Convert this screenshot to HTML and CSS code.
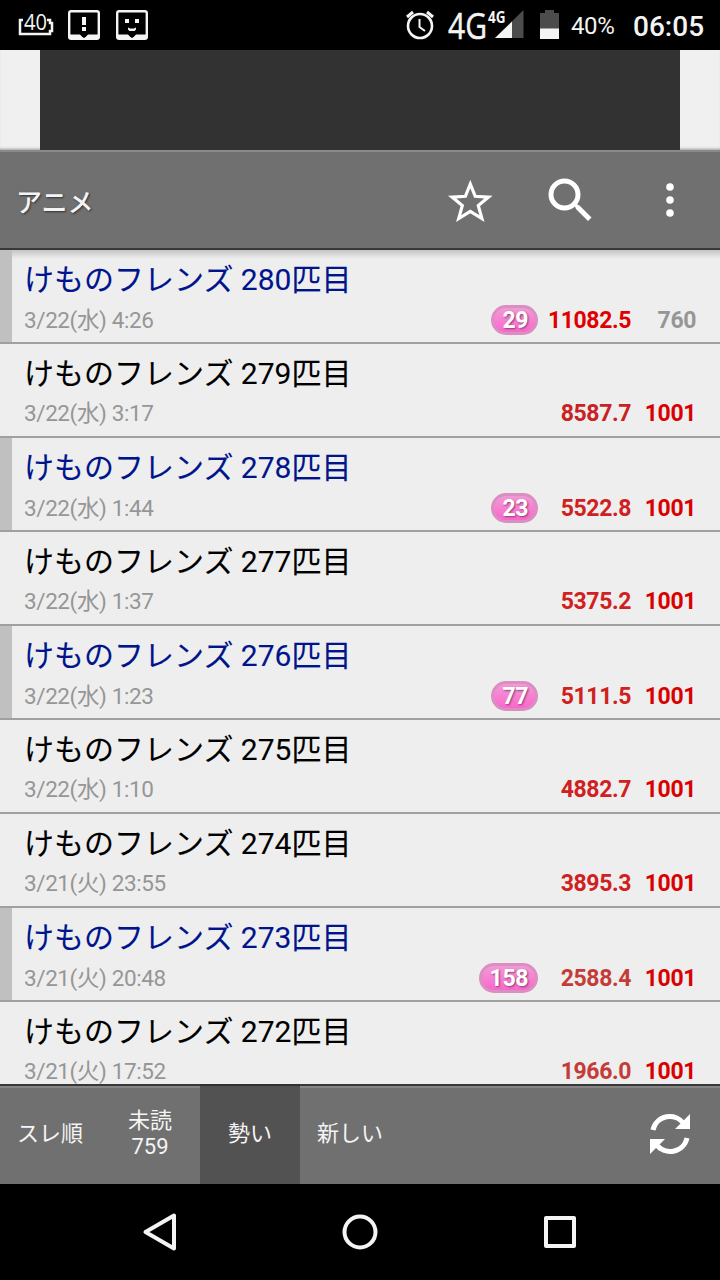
FILE: index.html
```
<!DOCTYPE html>
<html lang="ja">

<head>
    <meta charset="UTF-8">
    <meta name="viewport" content="width=device-width, initial-scale=1.0">
    <title>アニメ</title>
    <link rel="stylesheet" href="styles.css">
</head>

<body>

    <div class="status">
        <svg class="status-left" width="160" height="50" viewBox="0 0 160 50">
            <path d="M23 20h-3v14h30v-3h2v-8h-2v-3h-3" fill="none" stroke="#f4f4f4" stroke-width="2.5" />
            <text x="24" y="30" font-size="22" textLength="23" lengthAdjust="spacingAndGlyphs">40</text>
            <rect x="69.2" y="11.2" width="29.6" height="27.6" rx="2" fill="none" stroke="#f4f4f4" stroke-width="2.4" />
            <path d="M69 34.5h11l4 4 4-4h11v4.5h-30z" fill="#f4f4f4" />
            <path d="M80 34h8l-4 4z" fill="#000" />
            <path d="M82 17h4v8h-4zM82 27h4v4h-4z" fill="#f4f4f4" />
            <rect x="117.2" y="11.2" width="29.6" height="27.6" rx="2" fill="none" stroke="#f4f4f4" stroke-width="2.4" />
            <path d="M117 34.5h11l4 4 4-4h11v4.5h-30z" fill="#f4f4f4" />
            <path d="M128 34h8l-4 4z" fill="#000" />
            <path d="M125 19h4v4h-4zM135 19h4v4h-4zM128 27.5l2 1h4l2-1v2l-1.5 1.5h-5l-1.5-1.5z" fill="#f4f4f4" />
        </svg>
        <svg class="status-icons" width="165" height="50" viewBox="400 0 165 50">
            <g fill="none" stroke="#f4f4f4">
                <circle cx="420" cy="26" r="12" stroke-width="2.6" />
                <path d="M419.5 19v8l5.5 4" stroke-width="2" />
                <path d="M407 17l6-5M433 17l-6-5" stroke-width="3" />
            </g>
            <text class="net" x="448" y="39" font-size="37" textLength="39" lengthAdjust="spacingAndGlyphs">4G</text>
            <path d="M523.5 10v28H495z" fill="#4c4c4c" />
            <path d="M512 21.5V38H495z" fill="#f4f4f4" />
            <text class="net-small" x="488" y="23" font-size="16" textLength="17.5" lengthAdjust="spacingAndGlyphs">4G</text>
            <path d="M540 13h5v-3h9v3h5v16h-19z" fill="#4c4c4c" />
            <path d="M540 28.5h19V39h-19z" fill="#f4f4f4" />
        </svg>
        <span class="percent">40%</span>
        <span class="clock">06:05</span>
    </div>

    <div class="banner">
        <div class="ad"></div>
    </div>

    <div class="header">
        <h1>アニメ</h1>
        <div class="header-icons">
            <svg width="100" height="96" viewBox="420 152 100 96">
                <path d="M470.3 184l4.9 12.3 13.3.8-10.2 8.5 3.6 13-11.6-7.1-11.6 7.1 3.6-13-10.2-8.5 13.3-.8z" fill="none" stroke="#fff" stroke-width="3.2" />
            </svg>
            <svg width="100" height="96" viewBox="520 152 100 96">
                <circle cx="564.5" cy="194.5" r="13.5" fill="none" stroke="#fff" stroke-width="5" />
                <path d="M574 204l2 5 12 12 3.5-3.5-12-12-4-2z" fill="#fff" />
            </svg>
            <svg width="100" height="96" viewBox="620 152 100 96">
                <circle cx="670" cy="187" r="3.8" fill="#fff" />
                <circle cx="670" cy="200" r="3.8" fill="#fff" />
                <circle cx="670" cy="213" r="3.8" fill="#fff" />
            </svg>
        </div>
    </div>

    <div class="lista">
        <div class="row read">
            <h2>けものフレンズ 280匹目</h2>
            <div class="info"><span class="date">3/22(水) 4:26</span><span class="badge">29</span><span class="speed s1">11082.5</span><span class="count open">760</span></div>
        </div>
        <div class="row">
            <h2>けものフレンズ 279匹目</h2>
            <div class="info"><span class="date">3/22(水) 3:17</span><span class="speed s2">8587.7</span><span class="count">1001</span></div>
        </div>
        <div class="row read">
            <h2>けものフレンズ 278匹目</h2>
            <div class="info"><span class="date">3/22(水) 1:44</span><span class="badge">23</span><span class="speed s3">5522.8</span><span class="count">1001</span></div>
        </div>
        <div class="row">
            <h2>けものフレンズ 277匹目</h2>
            <div class="info"><span class="date">3/22(水) 1:37</span><span class="speed s3">5375.2</span><span class="count">1001</span></div>
        </div>
        <div class="row read">
            <h2>けものフレンズ 276匹目</h2>
            <div class="info"><span class="date">3/22(水) 1:23</span><span class="badge">77</span><span class="speed s3">5111.5</span><span class="count">1001</span></div>
        </div>
        <div class="row">
            <h2>けものフレンズ 275匹目</h2>
            <div class="info"><span class="date">3/22(水) 1:10</span><span class="speed s3">4882.7</span><span class="count">1001</span></div>
        </div>
        <div class="row">
            <h2>けものフレンズ 274匹目</h2>
            <div class="info"><span class="date">3/21(火) 23:55</span><span class="speed s3">3895.3</span><span class="count">1001</span></div>
        </div>
        <div class="row read">
            <h2>けものフレンズ 273匹目</h2>
            <div class="info"><span class="date">3/21(火) 20:48</span><span class="badge">158</span><span class="speed s4">2588.4</span><span class="count">1001</span></div>
        </div>
        <div class="row">
            <h2>けものフレンズ 272匹目</h2>
            <div class="info"><span class="date">3/21(火) 17:52</span><span class="speed s4">1966.0</span><span class="count">1001</span></div>
        </div>
    </div>

    <div class="tabs">
        <div class="tab">スレ順</div>
        <div class="tab">未読<br>759</div>
        <div class="tab active">勢い</div>
        <div class="tab">新しい</div>
        <svg class="reload" width="100" height="96" viewBox="620 1086 100 96">
            <g fill="none" stroke="#fff" stroke-width="5">
                <path d="M653 1130a17.2 17.2 0 0 1 31-6" />
                <path d="M687 1138a17.2 17.2 0 0 1-31 6" />
            </g>
            <path d="M690 1114v15h-15zM650 1154v-15h15z" fill="#fff" />
        </svg>
    </div>

    <div class="nav">
        <svg width="720" height="96" viewBox="0 1184 720 96">
            <g fill="none" stroke="#f4f4f4" stroke-width="4" stroke-linejoin="round">
                <path d="M174 1215.5v33L145.5 1232z" />
                <circle cx="360" cy="1232" r="15.5" />
                <rect x="546" y="1218" width="28" height="28" />
            </g>
        </svg>
    </div>

</body>

</html>
```
FILE: styles.css
```
* {
    margin: 0;
    padding: 0;
    box-sizing: border-box;
}

body {
    width: 720px;
    height: 1280px;
    overflow: hidden;
    display: flex;
    flex-direction: column;
    background-color: #000;
    font-family: Roboto, "Noto Sans CJK JP", sans-serif;
}

svg {
    display: block;
    flex: none;
}

.status {
    height: 50px;
    display: flex;
    align-items: center;
    background-color: #000;
    color: #f4f4f4;
}

.status text {
    fill: #f4f4f4;
    font-family: "Open Sans", "Noto Sans", sans-serif;
}

.status .net {
    stroke: #f4f4f4;
    stroke-width: 0.5px;
}

.status .net-small {
    font-weight: bold;
}

.status-icons {
    margin-left: auto;
}

.percent {
    width: 68px;
    padding-left: 6px;
    font-size: 24px;
    letter-spacing: -0.4px;
    line-height: 50px;
    padding-top: 2px;
}

.clock {
    width: 87px;
    font-size: 28px;
    font-weight: 500;
    line-height: 50px;
    padding-top: 3px;
}

.banner {
    height: 100px;
    padding: 0 40px;
    background-color: #f0f0f0;
    box-shadow: inset 0 -3px 3px -2px #999;
}

.ad {
    height: 100px;
    background-color: #323232;
}

.header {
    height: 100px;
    display: flex;
    align-items: center;
    justify-content: space-between;
    background-color: #707070;
    border-top: 2px solid #8a8a8a;
    border-bottom: 2px solid #383838;
}

.header h1 {
    padding: 5px 0 0 16px;
    font-size: 26px;
    font-weight: 500;
    line-height: 40px;
    color: #f4f4f4;
    text-shadow: 1px 1px 2px #333;
}

.header-icons {
    display: flex;
}

.lista {
    height: 834px;
    overflow: hidden;
    background-color: #eee;
    background-image: linear-gradient(#c4c4c4, #eee 9px);
}

.row {
    height: 94px;
    padding: 11px 24px 0 24px;
    border-bottom: 2px solid #a0a0a0;
    color: #000;
}

.row.read {
    background-image: linear-gradient(to right, #c0c0c0 12px, transparent 12px);
    color: #00148c;
}

.row h2 {
    height: 38px;
    font-size: 30px;
    font-weight: 400;
    line-height: 38px;
    white-space: pre;
    -webkit-text-stroke: 0.1px currentColor;
}

.info {
    height: 30px;
    margin-top: 6px;
    display: flex;
    align-items: center;
    font-size: 23px;
    letter-spacing: -0.4px;
    line-height: 30px;
}

.date {
    margin-right: auto;
    padding-bottom: 2px;
    font-size: 22.5px;
    color: #969696;
}

.read .date {
    padding-bottom: 1px;
}

.read .speed,
.read .count {
    padding-top: 1px;
}

.badge {
    height: 30px;
    margin-top: -1px;
    padding: 0 7px 0 8px;
    border: 3px solid #d98fc2;
    border-radius: 15px;
    background-image: linear-gradient(#f29ad6, #f968cb);
    color: #fff;
    font-weight: 700;
    line-height: 25px;
    text-shadow: 1px 1px 2px #8d3d74;
}

.speed {
    width: 93px;
    text-align: right;
    font-weight: 700;
}

.count {
    width: 65px;
    text-align: right;
    font-weight: 700;
    color: #d80000;
}

.count.open {
    color: #969696;
}

.s1 {
    color: #e00000;
}

.s2 {
    color: #c82222;
}

.s3 {
    color: #d02020;
}

.s4 {
    color: #c43c38;
}

.tabs {
    height: 100px;
    display: flex;
    background-color: #707070;
    background-image: linear-gradient(#383838 2px, #868686 2px, #868686 4px, transparent 4px);
}

.tab {
    width: 100px;
    display: flex;
    align-items: center;
    justify-content: center;
    text-align: center;
    font-size: 22px;
    line-height: 26px;
    color: #f4f4f4;
}

.tab.active {
    background-color: #525252;
    border-top: 2px solid #303030;
    padding-bottom: 2px;
}

.reload {
    margin: 2px 0 0 auto;
}

.nav {
    height: 96px;
    background-color: #000;
}
```
